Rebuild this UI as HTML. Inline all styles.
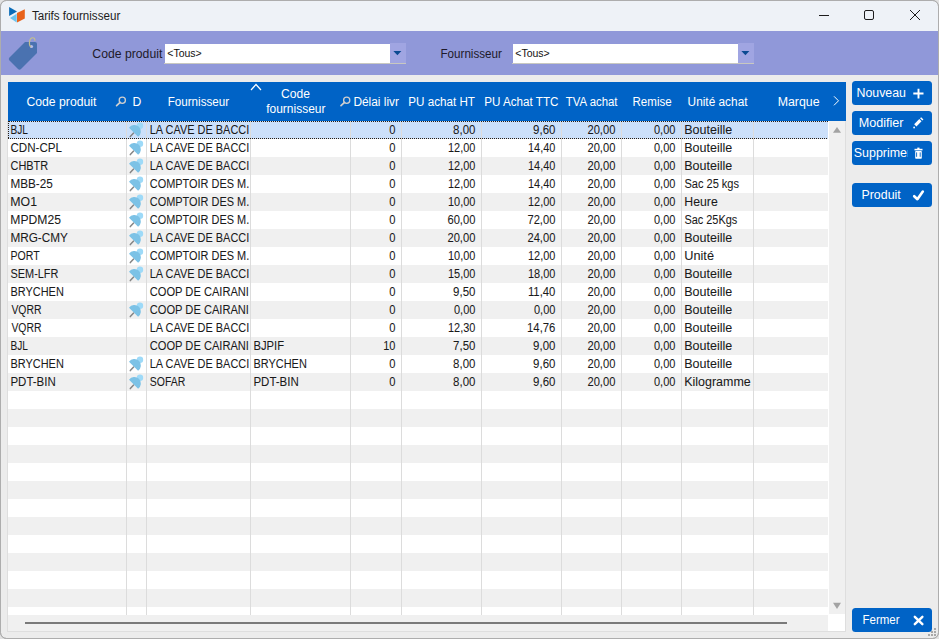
<!DOCTYPE html><html><head><meta charset="utf-8"><style>html,body{margin:0;padding:0;overflow:hidden;background:#fff}svg{display:block}text{font-family:"Liberation Sans",sans-serif}</style></head><body>
<svg width="939" height="639" viewBox="0 0 939 639">
<rect x="0" y="0" width="939" height="639" fill="#e2e2e2"/>
<rect x="0.5" y="0.5" width="938" height="638" rx="6" fill="#ececec" stroke="#adadad"/>
<path d="M1 7 Q1 1 7 1 L932 1 Q938 1 938 7 L938 31 L1 31 Z" fill="#eef2f7"/>
<polygon points="9.1,7.1 17,11.4 9.1,15.9" fill="#0a6cb8"/>
<polygon points="10,18.1 16.7,13.8 16.7,22.4" fill="#6cc4ee"/>
<polygon points="17,13.1 24.8,9.2 24.8,18.5 17,22.6" fill="#e8621a"/>
<text x="31.9" y="19.7" font-size="12" fill="#1c1c1c" text-anchor="start" textLength="88.36" lengthAdjust="spacingAndGlyphs">Tarifs fournisseur</text>
<rect x="819" y="15" width="10" height="1" fill="#1c1c1c"/>
<rect x="864.5" y="10.5" width="9" height="9" rx="1.5" fill="none" stroke="#1c1c1c"/>
<path d="M910 10 L920 20 M920 10 L910 20" stroke="#1c1c1c" stroke-width="1"/>
<rect x="1" y="31" width="937" height="44" fill="#9098d9"/>
<path d="M25 42 L35 42 Q37 42 37 44 L37 53 L21 69 Q19.5 70.5 18 69 L9.5 60.5 Q8 59 9.5 57.5 Z" fill="#4a72b0"/>
<circle cx="31.5" cy="46.5" r="1.6" fill="#b8bce8"/>
<path d="M31 47 C28.5 45.5 29 38.5 32.2 37.8 C34.2 37.4 35.2 39 34.8 40.8" fill="none" stroke="#c2be8e" stroke-width="1.15"/>
<text x="92.38" y="57.8" font-size="12" fill="#1e1a2a" text-anchor="start" textLength="69.93" lengthAdjust="spacingAndGlyphs">Code produit</text>
<text x="440.43" y="57.6" font-size="12" fill="#1e1a2a" text-anchor="start" textLength="61.52" lengthAdjust="spacingAndGlyphs">Fournisseur</text>
<rect x="165" y="44" width="225" height="19" fill="#ffffff"/>
<rect x="390" y="43" width="16" height="20" fill="#a0a5e2"/>
<rect x="164" y="63" width="242" height="1" fill="#c8c8c0"/>
<polygon points="393.4,51 401.4,51 397.4,55.2" fill="#0b4a92"/>
<rect x="513" y="44" width="225" height="19" fill="#ffffff"/>
<rect x="738" y="43" width="16" height="20" fill="#a0a5e2"/>
<rect x="512" y="63" width="242" height="1" fill="#c8c8c0"/>
<polygon points="741.4,51 749.4,51 745.4,55.2" fill="#0b4a92"/>
<text x="167.3" y="56.8" font-size="10.5" fill="#111" text-anchor="start" textLength="34.45" lengthAdjust="spacingAndGlyphs">&lt;Tous&gt;</text>
<text x="515.3" y="56.8" font-size="10.5" fill="#111" text-anchor="start" textLength="34.45" lengthAdjust="spacingAndGlyphs">&lt;Tous&gt;</text>
<rect x="8" y="82" width="838" height="39" fill="#0063c6"/>
<rect x="8" y="121" width="820" height="494" fill="#ffffff"/>
<rect x="8" y="121" width="820" height="18" fill="#cce0fa"/>
<rect x="8" y="157" width="820" height="18" fill="#f0f0f0"/>
<rect x="8" y="193" width="820" height="18" fill="#f0f0f0"/>
<rect x="8" y="229" width="820" height="18" fill="#f0f0f0"/>
<rect x="8" y="265" width="820" height="18" fill="#f0f0f0"/>
<rect x="8" y="301" width="820" height="18" fill="#f0f0f0"/>
<rect x="8" y="337" width="820" height="18" fill="#f0f0f0"/>
<rect x="8" y="373" width="820" height="18" fill="#f0f0f0"/>
<rect x="8" y="409" width="820" height="18" fill="#f0f0f0"/>
<rect x="8" y="445" width="820" height="18" fill="#f0f0f0"/>
<rect x="8" y="481" width="820" height="18" fill="#f0f0f0"/>
<rect x="8" y="517" width="820" height="18" fill="#f0f0f0"/>
<rect x="8" y="553" width="820" height="18" fill="#f0f0f0"/>
<rect x="8" y="589" width="820" height="18" fill="#f0f0f0"/>
<rect x="126" y="121" width="1" height="494" fill="#dcdcdc"/>
<rect x="146" y="121" width="1" height="494" fill="#dcdcdc"/>
<rect x="250" y="121" width="1" height="494" fill="#dcdcdc"/>
<rect x="350" y="121" width="1" height="494" fill="#dcdcdc"/>
<rect x="401" y="121" width="1" height="494" fill="#dcdcdc"/>
<rect x="481" y="121" width="1" height="494" fill="#dcdcdc"/>
<rect x="561" y="121" width="1" height="494" fill="#dcdcdc"/>
<rect x="621" y="121" width="1" height="494" fill="#dcdcdc"/>
<rect x="681" y="121" width="1" height="494" fill="#dcdcdc"/>
<rect x="753" y="121" width="1" height="494" fill="#dcdcdc"/>
<line x1="8" y1="121.5" x2="828" y2="121.5" stroke="#2a1e12" stroke-dasharray="1 1" stroke-dashoffset="1"/>
<line x1="8" y1="138.5" x2="828" y2="138.5" stroke="#2a1e12" stroke-dasharray="1 1"/>
<line x1="8.5" y1="121" x2="8.5" y2="139" stroke="#2a1e12" stroke-dasharray="1 1"/>
<text x="26.48" y="105.6" font-size="12" fill="#ffffff" text-anchor="start" textLength="69.93" lengthAdjust="spacingAndGlyphs">Code produit</text>
<text x="132.49" y="105.9" font-size="12" fill="#ffffff" text-anchor="start" textLength="8.8" lengthAdjust="spacingAndGlyphs">D</text>
<text x="167.63" y="105.9" font-size="12" fill="#ffffff" text-anchor="start" textLength="61.52" lengthAdjust="spacingAndGlyphs">Fournisseur</text>
<text x="280.99" y="97.9" font-size="12" fill="#ffffff" text-anchor="start" textLength="28.9" lengthAdjust="spacingAndGlyphs">Code</text>
<text x="266.2" y="112.8" font-size="12" fill="#ffffff" text-anchor="start" textLength="59.27" lengthAdjust="spacingAndGlyphs">fournisseur</text>
<text x="353.41" y="105.9" font-size="12" fill="#ffffff" text-anchor="start" textLength="45.61" lengthAdjust="spacingAndGlyphs">Délai livr</text>
<text x="408.33" y="105.9" font-size="12" fill="#ffffff" text-anchor="start" textLength="66.65" lengthAdjust="spacingAndGlyphs">PU achat HT</text>
<text x="484.23" y="105.9" font-size="12" fill="#ffffff" text-anchor="start" textLength="74.24" lengthAdjust="spacingAndGlyphs">PU Achat TTC</text>
<text x="565.8" y="105.9" font-size="12" fill="#ffffff" text-anchor="start" textLength="51.71" lengthAdjust="spacingAndGlyphs">TVA achat</text>
<text x="632.54" y="105.9" font-size="12" fill="#ffffff" text-anchor="start" textLength="39.12" lengthAdjust="spacingAndGlyphs">Remise</text>
<text x="687.61" y="105.9" font-size="12" fill="#ffffff" text-anchor="start" textLength="59.89" lengthAdjust="spacingAndGlyphs">Unité achat</text>
<text x="777.67" y="105.9" font-size="12" fill="#ffffff" text-anchor="start" textLength="41.94" lengthAdjust="spacingAndGlyphs">Marque</text>
<circle cx="122.3" cy="100.19999999999999" r="3.1" fill="none" stroke="#cfcfcf" stroke-width="1.3"/>
<line x1="116.60000000000001" y1="105.69999999999999" x2="120.10000000000001" y2="102.39999999999999" stroke="#cfcfcf" stroke-width="1.7" stroke-linecap="round"/>
<circle cx="346.70000000000005" cy="100.19999999999999" r="3.1" fill="none" stroke="#cfcfcf" stroke-width="1.3"/>
<line x1="341.0" y1="105.69999999999999" x2="344.5" y2="102.39999999999999" stroke="#cfcfcf" stroke-width="1.7" stroke-linecap="round"/>
<polyline points="251,90 256,84.5 261,90" fill="none" stroke="#ffffff" stroke-width="1.2"/>
<polyline points="834,96.3 838.5,100.8 834,105.3" fill="none" stroke="#ffffff" stroke-width="1"/>
<text x="10.56" y="133.8" font-size="12" fill="#1a1a1a" text-anchor="start" textLength="17.42" lengthAdjust="spacingAndGlyphs" stroke="#1a1a1a" stroke-width="0.06">BJL</text>
<g transform="translate(126,121)"><line x1="4.3" y1="15.6" x2="7.6" y2="12.1" stroke="#858585" stroke-width="1.5" stroke-linecap="round"/><circle cx="14" cy="4.7" r="3.2" fill="#9edaf8"/><path d="M3 6.8 A6.5 6.5 0 1 1 12.1 15.8 Z" fill="#7cc2e6"/></g>
<svg x="146" y="121" width="103" height="18" overflow="hidden">
<text x="3.79" y="12.8" font-size="12" fill="#1a1a1a" text-anchor="start" textLength="99.46" lengthAdjust="spacingAndGlyphs" stroke="#1a1a1a" stroke-width="0.06">LA CAVE DE BACCI</text>
</svg>
<text x="395.4" y="133.8" font-size="12" fill="#1a1a1a" text-anchor="end" textLength="6.24" lengthAdjust="spacingAndGlyphs" stroke="#1a1a1a" stroke-width="0.06">0</text>
<text x="475.4" y="133.8" font-size="12" fill="#1a1a1a" text-anchor="end" textLength="22.3" lengthAdjust="spacingAndGlyphs" stroke="#1a1a1a" stroke-width="0.06">8,00</text>
<text x="555.4" y="133.8" font-size="12" fill="#1a1a1a" text-anchor="end" textLength="22.3" lengthAdjust="spacingAndGlyphs" stroke="#1a1a1a" stroke-width="0.06">9,60</text>
<text x="615.4" y="133.8" font-size="12" fill="#1a1a1a" text-anchor="end" textLength="27.96" lengthAdjust="spacingAndGlyphs" stroke="#1a1a1a" stroke-width="0.06">20,00</text>
<text x="675.4" y="133.8" font-size="12" fill="#1a1a1a" text-anchor="end" textLength="21.43" lengthAdjust="spacingAndGlyphs" stroke="#1a1a1a" stroke-width="0.06">0,00</text>
<text x="684.26" y="133.8" font-size="12" fill="#1a1a1a" text-anchor="start" textLength="48.02" lengthAdjust="spacingAndGlyphs" stroke="#1a1a1a" stroke-width="0.06">Bouteille</text>
<text x="10.43" y="151.8" font-size="12" fill="#1a1a1a" text-anchor="start" textLength="51.5" lengthAdjust="spacingAndGlyphs" stroke="#1a1a1a" stroke-width="0.06">CDN-CPL</text>
<g transform="translate(126,139)"><line x1="4.3" y1="15.6" x2="7.6" y2="12.1" stroke="#858585" stroke-width="1.5" stroke-linecap="round"/><circle cx="14" cy="4.7" r="3.2" fill="#9edaf8"/><path d="M3 6.8 A6.5 6.5 0 1 1 12.1 15.8 Z" fill="#7cc2e6"/></g>
<svg x="146" y="139" width="103" height="18" overflow="hidden">
<text x="3.79" y="12.8" font-size="12" fill="#1a1a1a" text-anchor="start" textLength="99.46" lengthAdjust="spacingAndGlyphs" stroke="#1a1a1a" stroke-width="0.06">LA CAVE DE BACCI</text>
</svg>
<text x="395.4" y="151.8" font-size="12" fill="#1a1a1a" text-anchor="end" textLength="6.24" lengthAdjust="spacingAndGlyphs" stroke="#1a1a1a" stroke-width="0.06">0</text>
<text x="475.4" y="151.8" font-size="12" fill="#1a1a1a" text-anchor="end" textLength="27.34" lengthAdjust="spacingAndGlyphs" stroke="#1a1a1a" stroke-width="0.06">12,00</text>
<text x="555.4" y="151.8" font-size="12" fill="#1a1a1a" text-anchor="end" textLength="27.34" lengthAdjust="spacingAndGlyphs" stroke="#1a1a1a" stroke-width="0.06">14,40</text>
<text x="615.4" y="151.8" font-size="12" fill="#1a1a1a" text-anchor="end" textLength="27.96" lengthAdjust="spacingAndGlyphs" stroke="#1a1a1a" stroke-width="0.06">20,00</text>
<text x="675.4" y="151.8" font-size="12" fill="#1a1a1a" text-anchor="end" textLength="21.43" lengthAdjust="spacingAndGlyphs" stroke="#1a1a1a" stroke-width="0.06">0,00</text>
<text x="684.26" y="151.8" font-size="12" fill="#1a1a1a" text-anchor="start" textLength="48.02" lengthAdjust="spacingAndGlyphs" stroke="#1a1a1a" stroke-width="0.06">Bouteille</text>
<text x="10.49" y="169.8" font-size="12" fill="#1a1a1a" text-anchor="start" textLength="37.73" lengthAdjust="spacingAndGlyphs" stroke="#1a1a1a" stroke-width="0.06">CHBTR</text>
<g transform="translate(126,157)"><line x1="4.3" y1="15.6" x2="7.6" y2="12.1" stroke="#858585" stroke-width="1.5" stroke-linecap="round"/><circle cx="14" cy="4.7" r="3.2" fill="#9edaf8"/><path d="M3 6.8 A6.5 6.5 0 1 1 12.1 15.8 Z" fill="#7cc2e6"/></g>
<svg x="146" y="157" width="103" height="18" overflow="hidden">
<text x="3.79" y="12.8" font-size="12" fill="#1a1a1a" text-anchor="start" textLength="99.46" lengthAdjust="spacingAndGlyphs" stroke="#1a1a1a" stroke-width="0.06">LA CAVE DE BACCI</text>
</svg>
<text x="395.4" y="169.8" font-size="12" fill="#1a1a1a" text-anchor="end" textLength="6.24" lengthAdjust="spacingAndGlyphs" stroke="#1a1a1a" stroke-width="0.06">0</text>
<text x="475.4" y="169.8" font-size="12" fill="#1a1a1a" text-anchor="end" textLength="27.34" lengthAdjust="spacingAndGlyphs" stroke="#1a1a1a" stroke-width="0.06">12,00</text>
<text x="555.4" y="169.8" font-size="12" fill="#1a1a1a" text-anchor="end" textLength="27.34" lengthAdjust="spacingAndGlyphs" stroke="#1a1a1a" stroke-width="0.06">14,40</text>
<text x="615.4" y="169.8" font-size="12" fill="#1a1a1a" text-anchor="end" textLength="27.96" lengthAdjust="spacingAndGlyphs" stroke="#1a1a1a" stroke-width="0.06">20,00</text>
<text x="675.4" y="169.8" font-size="12" fill="#1a1a1a" text-anchor="end" textLength="21.43" lengthAdjust="spacingAndGlyphs" stroke="#1a1a1a" stroke-width="0.06">0,00</text>
<text x="684.26" y="169.8" font-size="12" fill="#1a1a1a" text-anchor="start" textLength="48.02" lengthAdjust="spacingAndGlyphs" stroke="#1a1a1a" stroke-width="0.06">Bouteille</text>
<text x="10.42" y="187.8" font-size="12" fill="#1a1a1a" text-anchor="start" textLength="42.33" lengthAdjust="spacingAndGlyphs" stroke="#1a1a1a" stroke-width="0.06">MBB-25</text>
<g transform="translate(126,175)"><line x1="4.3" y1="15.6" x2="7.6" y2="12.1" stroke="#858585" stroke-width="1.5" stroke-linecap="round"/><circle cx="14" cy="4.7" r="3.2" fill="#9edaf8"/><path d="M3 6.8 A6.5 6.5 0 1 1 12.1 15.8 Z" fill="#7cc2e6"/></g>
<svg x="146" y="175" width="103" height="18" overflow="hidden">
<text x="3.79" y="12.8" font-size="12" fill="#1a1a1a" text-anchor="start" textLength="99.44" lengthAdjust="spacingAndGlyphs" stroke="#1a1a1a" stroke-width="0.06">COMPTOIR DES M.</text>
</svg>
<text x="395.4" y="187.8" font-size="12" fill="#1a1a1a" text-anchor="end" textLength="6.24" lengthAdjust="spacingAndGlyphs" stroke="#1a1a1a" stroke-width="0.06">0</text>
<text x="475.4" y="187.8" font-size="12" fill="#1a1a1a" text-anchor="end" textLength="27.34" lengthAdjust="spacingAndGlyphs" stroke="#1a1a1a" stroke-width="0.06">12,00</text>
<text x="555.4" y="187.8" font-size="12" fill="#1a1a1a" text-anchor="end" textLength="27.34" lengthAdjust="spacingAndGlyphs" stroke="#1a1a1a" stroke-width="0.06">14,40</text>
<text x="615.4" y="187.8" font-size="12" fill="#1a1a1a" text-anchor="end" textLength="27.96" lengthAdjust="spacingAndGlyphs" stroke="#1a1a1a" stroke-width="0.06">20,00</text>
<text x="675.4" y="187.8" font-size="12" fill="#1a1a1a" text-anchor="end" textLength="21.43" lengthAdjust="spacingAndGlyphs" stroke="#1a1a1a" stroke-width="0.06">0,00</text>
<text x="684.38" y="187.8" font-size="12" fill="#1a1a1a" text-anchor="start" textLength="54.67" lengthAdjust="spacingAndGlyphs" stroke="#1a1a1a" stroke-width="0.06">Sac 25 kgs</text>
<text x="10.38" y="205.8" font-size="12" fill="#1a1a1a" text-anchor="start" textLength="26.67" lengthAdjust="spacingAndGlyphs" stroke="#1a1a1a" stroke-width="0.06">MO1</text>
<g transform="translate(126,193)"><line x1="4.3" y1="15.6" x2="7.6" y2="12.1" stroke="#858585" stroke-width="1.5" stroke-linecap="round"/><circle cx="14" cy="4.7" r="3.2" fill="#9edaf8"/><path d="M3 6.8 A6.5 6.5 0 1 1 12.1 15.8 Z" fill="#7cc2e6"/></g>
<svg x="146" y="193" width="103" height="18" overflow="hidden">
<text x="3.79" y="12.8" font-size="12" fill="#1a1a1a" text-anchor="start" textLength="99.44" lengthAdjust="spacingAndGlyphs" stroke="#1a1a1a" stroke-width="0.06">COMPTOIR DES M.</text>
</svg>
<text x="395.4" y="205.8" font-size="12" fill="#1a1a1a" text-anchor="end" textLength="6.24" lengthAdjust="spacingAndGlyphs" stroke="#1a1a1a" stroke-width="0.06">0</text>
<text x="475.4" y="205.8" font-size="12" fill="#1a1a1a" text-anchor="end" textLength="27.34" lengthAdjust="spacingAndGlyphs" stroke="#1a1a1a" stroke-width="0.06">10,00</text>
<text x="555.4" y="205.8" font-size="12" fill="#1a1a1a" text-anchor="end" textLength="27.34" lengthAdjust="spacingAndGlyphs" stroke="#1a1a1a" stroke-width="0.06">12,00</text>
<text x="615.4" y="205.8" font-size="12" fill="#1a1a1a" text-anchor="end" textLength="27.96" lengthAdjust="spacingAndGlyphs" stroke="#1a1a1a" stroke-width="0.06">20,00</text>
<text x="675.4" y="205.8" font-size="12" fill="#1a1a1a" text-anchor="end" textLength="21.43" lengthAdjust="spacingAndGlyphs" stroke="#1a1a1a" stroke-width="0.06">0,00</text>
<text x="684.27" y="205.8" font-size="12" fill="#1a1a1a" text-anchor="start" textLength="33.53" lengthAdjust="spacingAndGlyphs" stroke="#1a1a1a" stroke-width="0.06">Heure</text>
<text x="10.39" y="223.8" font-size="12" fill="#1a1a1a" text-anchor="start" textLength="50.54" lengthAdjust="spacingAndGlyphs" stroke="#1a1a1a" stroke-width="0.06">MPDM25</text>
<g transform="translate(126,211)"><line x1="4.3" y1="15.6" x2="7.6" y2="12.1" stroke="#858585" stroke-width="1.5" stroke-linecap="round"/><circle cx="14" cy="4.7" r="3.2" fill="#9edaf8"/><path d="M3 6.8 A6.5 6.5 0 1 1 12.1 15.8 Z" fill="#7cc2e6"/></g>
<svg x="146" y="211" width="103" height="18" overflow="hidden">
<text x="3.79" y="12.8" font-size="12" fill="#1a1a1a" text-anchor="start" textLength="99.44" lengthAdjust="spacingAndGlyphs" stroke="#1a1a1a" stroke-width="0.06">COMPTOIR DES M.</text>
</svg>
<text x="395.4" y="223.8" font-size="12" fill="#1a1a1a" text-anchor="end" textLength="6.24" lengthAdjust="spacingAndGlyphs" stroke="#1a1a1a" stroke-width="0.06">0</text>
<text x="475.4" y="223.8" font-size="12" fill="#1a1a1a" text-anchor="end" textLength="27.96" lengthAdjust="spacingAndGlyphs" stroke="#1a1a1a" stroke-width="0.06">60,00</text>
<text x="555.4" y="223.8" font-size="12" fill="#1a1a1a" text-anchor="end" textLength="27.96" lengthAdjust="spacingAndGlyphs" stroke="#1a1a1a" stroke-width="0.06">72,00</text>
<text x="615.4" y="223.8" font-size="12" fill="#1a1a1a" text-anchor="end" textLength="27.96" lengthAdjust="spacingAndGlyphs" stroke="#1a1a1a" stroke-width="0.06">20,00</text>
<text x="675.4" y="223.8" font-size="12" fill="#1a1a1a" text-anchor="end" textLength="21.43" lengthAdjust="spacingAndGlyphs" stroke="#1a1a1a" stroke-width="0.06">0,00</text>
<text x="684.39" y="223.8" font-size="12" fill="#1a1a1a" text-anchor="start" textLength="52.96" lengthAdjust="spacingAndGlyphs" stroke="#1a1a1a" stroke-width="0.06">Sac 25Kgs</text>
<text x="10.42" y="241.8" font-size="12" fill="#1a1a1a" text-anchor="start" textLength="57.54" lengthAdjust="spacingAndGlyphs" stroke="#1a1a1a" stroke-width="0.06">MRG-CMY</text>
<g transform="translate(126,229)"><line x1="4.3" y1="15.6" x2="7.6" y2="12.1" stroke="#858585" stroke-width="1.5" stroke-linecap="round"/><circle cx="14" cy="4.7" r="3.2" fill="#9edaf8"/><path d="M3 6.8 A6.5 6.5 0 1 1 12.1 15.8 Z" fill="#7cc2e6"/></g>
<svg x="146" y="229" width="103" height="18" overflow="hidden">
<text x="3.79" y="12.8" font-size="12" fill="#1a1a1a" text-anchor="start" textLength="99.46" lengthAdjust="spacingAndGlyphs" stroke="#1a1a1a" stroke-width="0.06">LA CAVE DE BACCI</text>
</svg>
<text x="395.4" y="241.8" font-size="12" fill="#1a1a1a" text-anchor="end" textLength="6.24" lengthAdjust="spacingAndGlyphs" stroke="#1a1a1a" stroke-width="0.06">0</text>
<text x="475.4" y="241.8" font-size="12" fill="#1a1a1a" text-anchor="end" textLength="27.96" lengthAdjust="spacingAndGlyphs" stroke="#1a1a1a" stroke-width="0.06">20,00</text>
<text x="555.4" y="241.8" font-size="12" fill="#1a1a1a" text-anchor="end" textLength="27.96" lengthAdjust="spacingAndGlyphs" stroke="#1a1a1a" stroke-width="0.06">24,00</text>
<text x="615.4" y="241.8" font-size="12" fill="#1a1a1a" text-anchor="end" textLength="27.96" lengthAdjust="spacingAndGlyphs" stroke="#1a1a1a" stroke-width="0.06">20,00</text>
<text x="675.4" y="241.8" font-size="12" fill="#1a1a1a" text-anchor="end" textLength="21.43" lengthAdjust="spacingAndGlyphs" stroke="#1a1a1a" stroke-width="0.06">0,00</text>
<text x="684.26" y="241.8" font-size="12" fill="#1a1a1a" text-anchor="start" textLength="48.02" lengthAdjust="spacingAndGlyphs" stroke="#1a1a1a" stroke-width="0.06">Bouteille</text>
<text x="10.52" y="259.8" font-size="12" fill="#1a1a1a" text-anchor="start" textLength="29.09" lengthAdjust="spacingAndGlyphs" stroke="#1a1a1a" stroke-width="0.06">PORT</text>
<g transform="translate(126,247)"><line x1="4.3" y1="15.6" x2="7.6" y2="12.1" stroke="#858585" stroke-width="1.5" stroke-linecap="round"/><circle cx="14" cy="4.7" r="3.2" fill="#9edaf8"/><path d="M3 6.8 A6.5 6.5 0 1 1 12.1 15.8 Z" fill="#7cc2e6"/></g>
<svg x="146" y="247" width="103" height="18" overflow="hidden">
<text x="3.79" y="12.8" font-size="12" fill="#1a1a1a" text-anchor="start" textLength="99.44" lengthAdjust="spacingAndGlyphs" stroke="#1a1a1a" stroke-width="0.06">COMPTOIR DES M.</text>
</svg>
<text x="395.4" y="259.8" font-size="12" fill="#1a1a1a" text-anchor="end" textLength="6.24" lengthAdjust="spacingAndGlyphs" stroke="#1a1a1a" stroke-width="0.06">0</text>
<text x="475.4" y="259.8" font-size="12" fill="#1a1a1a" text-anchor="end" textLength="27.34" lengthAdjust="spacingAndGlyphs" stroke="#1a1a1a" stroke-width="0.06">10,00</text>
<text x="555.4" y="259.8" font-size="12" fill="#1a1a1a" text-anchor="end" textLength="27.34" lengthAdjust="spacingAndGlyphs" stroke="#1a1a1a" stroke-width="0.06">12,00</text>
<text x="615.4" y="259.8" font-size="12" fill="#1a1a1a" text-anchor="end" textLength="27.96" lengthAdjust="spacingAndGlyphs" stroke="#1a1a1a" stroke-width="0.06">20,00</text>
<text x="675.4" y="259.8" font-size="12" fill="#1a1a1a" text-anchor="end" textLength="21.43" lengthAdjust="spacingAndGlyphs" stroke="#1a1a1a" stroke-width="0.06">0,00</text>
<text x="684.24" y="259.8" font-size="12" fill="#1a1a1a" text-anchor="start" textLength="29.74" lengthAdjust="spacingAndGlyphs" stroke="#1a1a1a" stroke-width="0.06">Unité</text>
<text x="10.49" y="277.8" font-size="12" fill="#1a1a1a" text-anchor="start" textLength="47.92" lengthAdjust="spacingAndGlyphs" stroke="#1a1a1a" stroke-width="0.06">SEM-LFR</text>
<g transform="translate(126,265)"><line x1="4.3" y1="15.6" x2="7.6" y2="12.1" stroke="#858585" stroke-width="1.5" stroke-linecap="round"/><circle cx="14" cy="4.7" r="3.2" fill="#9edaf8"/><path d="M3 6.8 A6.5 6.5 0 1 1 12.1 15.8 Z" fill="#7cc2e6"/></g>
<svg x="146" y="265" width="103" height="18" overflow="hidden">
<text x="3.79" y="12.8" font-size="12" fill="#1a1a1a" text-anchor="start" textLength="99.46" lengthAdjust="spacingAndGlyphs" stroke="#1a1a1a" stroke-width="0.06">LA CAVE DE BACCI</text>
</svg>
<text x="395.4" y="277.8" font-size="12" fill="#1a1a1a" text-anchor="end" textLength="6.24" lengthAdjust="spacingAndGlyphs" stroke="#1a1a1a" stroke-width="0.06">0</text>
<text x="475.4" y="277.8" font-size="12" fill="#1a1a1a" text-anchor="end" textLength="27.34" lengthAdjust="spacingAndGlyphs" stroke="#1a1a1a" stroke-width="0.06">15,00</text>
<text x="555.4" y="277.8" font-size="12" fill="#1a1a1a" text-anchor="end" textLength="27.34" lengthAdjust="spacingAndGlyphs" stroke="#1a1a1a" stroke-width="0.06">18,00</text>
<text x="615.4" y="277.8" font-size="12" fill="#1a1a1a" text-anchor="end" textLength="27.96" lengthAdjust="spacingAndGlyphs" stroke="#1a1a1a" stroke-width="0.06">20,00</text>
<text x="675.4" y="277.8" font-size="12" fill="#1a1a1a" text-anchor="end" textLength="21.43" lengthAdjust="spacingAndGlyphs" stroke="#1a1a1a" stroke-width="0.06">0,00</text>
<text x="684.26" y="277.8" font-size="12" fill="#1a1a1a" text-anchor="start" textLength="48.02" lengthAdjust="spacingAndGlyphs" stroke="#1a1a1a" stroke-width="0.06">Bouteille</text>
<text x="10.49" y="295.8" font-size="12" fill="#1a1a1a" text-anchor="start" textLength="53.34" lengthAdjust="spacingAndGlyphs" stroke="#1a1a1a" stroke-width="0.06">BRYCHEN</text>
<svg x="146" y="283" width="103" height="18" overflow="hidden">
<text x="3.77" y="12.8" font-size="12" fill="#1a1a1a" text-anchor="start" textLength="99.18" lengthAdjust="spacingAndGlyphs" stroke="#1a1a1a" stroke-width="0.06">COOP DE CAIRANI</text>
</svg>
<text x="395.4" y="295.8" font-size="12" fill="#1a1a1a" text-anchor="end" textLength="6.24" lengthAdjust="spacingAndGlyphs" stroke="#1a1a1a" stroke-width="0.06">0</text>
<text x="475.4" y="295.8" font-size="12" fill="#1a1a1a" text-anchor="end" textLength="22.3" lengthAdjust="spacingAndGlyphs" stroke="#1a1a1a" stroke-width="0.06">9,50</text>
<text x="555.4" y="295.8" font-size="12" fill="#1a1a1a" text-anchor="end" textLength="27.48" lengthAdjust="spacingAndGlyphs" stroke="#1a1a1a" stroke-width="0.06">11,40</text>
<text x="615.4" y="295.8" font-size="12" fill="#1a1a1a" text-anchor="end" textLength="27.96" lengthAdjust="spacingAndGlyphs" stroke="#1a1a1a" stroke-width="0.06">20,00</text>
<text x="675.4" y="295.8" font-size="12" fill="#1a1a1a" text-anchor="end" textLength="21.43" lengthAdjust="spacingAndGlyphs" stroke="#1a1a1a" stroke-width="0.06">0,00</text>
<text x="684.26" y="295.8" font-size="12" fill="#1a1a1a" text-anchor="start" textLength="48.02" lengthAdjust="spacingAndGlyphs" stroke="#1a1a1a" stroke-width="0.06">Bouteille</text>
<text x="11.4" y="313.8" font-size="12" fill="#1a1a1a" text-anchor="start" textLength="30.08" lengthAdjust="spacingAndGlyphs" stroke="#1a1a1a" stroke-width="0.06">VQRR</text>
<g transform="translate(126,301)"><line x1="4.3" y1="15.6" x2="7.6" y2="12.1" stroke="#858585" stroke-width="1.5" stroke-linecap="round"/><circle cx="14" cy="4.7" r="3.2" fill="#9edaf8"/><path d="M3 6.8 A6.5 6.5 0 1 1 12.1 15.8 Z" fill="#7cc2e6"/></g>
<svg x="146" y="301" width="103" height="18" overflow="hidden">
<text x="3.77" y="12.8" font-size="12" fill="#1a1a1a" text-anchor="start" textLength="99.18" lengthAdjust="spacingAndGlyphs" stroke="#1a1a1a" stroke-width="0.06">COOP DE CAIRANI</text>
</svg>
<text x="395.4" y="313.8" font-size="12" fill="#1a1a1a" text-anchor="end" textLength="6.24" lengthAdjust="spacingAndGlyphs" stroke="#1a1a1a" stroke-width="0.06">0</text>
<text x="475.4" y="313.8" font-size="12" fill="#1a1a1a" text-anchor="end" textLength="21.43" lengthAdjust="spacingAndGlyphs" stroke="#1a1a1a" stroke-width="0.06">0,00</text>
<text x="555.4" y="313.8" font-size="12" fill="#1a1a1a" text-anchor="end" textLength="21.43" lengthAdjust="spacingAndGlyphs" stroke="#1a1a1a" stroke-width="0.06">0,00</text>
<text x="615.4" y="313.8" font-size="12" fill="#1a1a1a" text-anchor="end" textLength="27.96" lengthAdjust="spacingAndGlyphs" stroke="#1a1a1a" stroke-width="0.06">20,00</text>
<text x="675.4" y="313.8" font-size="12" fill="#1a1a1a" text-anchor="end" textLength="21.43" lengthAdjust="spacingAndGlyphs" stroke="#1a1a1a" stroke-width="0.06">0,00</text>
<text x="684.26" y="313.8" font-size="12" fill="#1a1a1a" text-anchor="start" textLength="48.02" lengthAdjust="spacingAndGlyphs" stroke="#1a1a1a" stroke-width="0.06">Bouteille</text>
<text x="11.4" y="331.8" font-size="12" fill="#1a1a1a" text-anchor="start" textLength="30.08" lengthAdjust="spacingAndGlyphs" stroke="#1a1a1a" stroke-width="0.06">VQRR</text>
<svg x="146" y="319" width="103" height="18" overflow="hidden">
<text x="3.79" y="12.8" font-size="12" fill="#1a1a1a" text-anchor="start" textLength="99.46" lengthAdjust="spacingAndGlyphs" stroke="#1a1a1a" stroke-width="0.06">LA CAVE DE BACCI</text>
</svg>
<text x="395.4" y="331.8" font-size="12" fill="#1a1a1a" text-anchor="end" textLength="6.24" lengthAdjust="spacingAndGlyphs" stroke="#1a1a1a" stroke-width="0.06">0</text>
<text x="475.4" y="331.8" font-size="12" fill="#1a1a1a" text-anchor="end" textLength="27.34" lengthAdjust="spacingAndGlyphs" stroke="#1a1a1a" stroke-width="0.06">12,30</text>
<text x="555.4" y="331.8" font-size="12" fill="#1a1a1a" text-anchor="end" textLength="28.32" lengthAdjust="spacingAndGlyphs" stroke="#1a1a1a" stroke-width="0.06">14,76</text>
<text x="615.4" y="331.8" font-size="12" fill="#1a1a1a" text-anchor="end" textLength="27.96" lengthAdjust="spacingAndGlyphs" stroke="#1a1a1a" stroke-width="0.06">20,00</text>
<text x="675.4" y="331.8" font-size="12" fill="#1a1a1a" text-anchor="end" textLength="21.43" lengthAdjust="spacingAndGlyphs" stroke="#1a1a1a" stroke-width="0.06">0,00</text>
<text x="684.26" y="331.8" font-size="12" fill="#1a1a1a" text-anchor="start" textLength="48.02" lengthAdjust="spacingAndGlyphs" stroke="#1a1a1a" stroke-width="0.06">Bouteille</text>
<text x="10.56" y="349.8" font-size="12" fill="#1a1a1a" text-anchor="start" textLength="17.42" lengthAdjust="spacingAndGlyphs" stroke="#1a1a1a" stroke-width="0.06">BJL</text>
<svg x="146" y="337" width="103" height="18" overflow="hidden">
<text x="3.77" y="12.8" font-size="12" fill="#1a1a1a" text-anchor="start" textLength="99.18" lengthAdjust="spacingAndGlyphs" stroke="#1a1a1a" stroke-width="0.06">COOP DE CAIRANI</text>
</svg>
<text x="253.46" y="349.8" font-size="12" fill="#1a1a1a" text-anchor="start" textLength="30.56" lengthAdjust="spacingAndGlyphs" stroke="#1a1a1a" stroke-width="0.06">BJPIF</text>
<text x="395.4" y="349.8" font-size="12" fill="#1a1a1a" text-anchor="end" textLength="12.25" lengthAdjust="spacingAndGlyphs" stroke="#1a1a1a" stroke-width="0.06">10</text>
<text x="475.4" y="349.8" font-size="12" fill="#1a1a1a" text-anchor="end" textLength="22.3" lengthAdjust="spacingAndGlyphs" stroke="#1a1a1a" stroke-width="0.06">7,50</text>
<text x="555.4" y="349.8" font-size="12" fill="#1a1a1a" text-anchor="end" textLength="22.3" lengthAdjust="spacingAndGlyphs" stroke="#1a1a1a" stroke-width="0.06">9,00</text>
<text x="615.4" y="349.8" font-size="12" fill="#1a1a1a" text-anchor="end" textLength="27.96" lengthAdjust="spacingAndGlyphs" stroke="#1a1a1a" stroke-width="0.06">20,00</text>
<text x="675.4" y="349.8" font-size="12" fill="#1a1a1a" text-anchor="end" textLength="21.43" lengthAdjust="spacingAndGlyphs" stroke="#1a1a1a" stroke-width="0.06">0,00</text>
<text x="684.26" y="349.8" font-size="12" fill="#1a1a1a" text-anchor="start" textLength="48.02" lengthAdjust="spacingAndGlyphs" stroke="#1a1a1a" stroke-width="0.06">Bouteille</text>
<text x="10.49" y="367.8" font-size="12" fill="#1a1a1a" text-anchor="start" textLength="53.34" lengthAdjust="spacingAndGlyphs" stroke="#1a1a1a" stroke-width="0.06">BRYCHEN</text>
<g transform="translate(126,355)"><line x1="4.3" y1="15.6" x2="7.6" y2="12.1" stroke="#858585" stroke-width="1.5" stroke-linecap="round"/><circle cx="14" cy="4.7" r="3.2" fill="#9edaf8"/><path d="M3 6.8 A6.5 6.5 0 1 1 12.1 15.8 Z" fill="#7cc2e6"/></g>
<svg x="146" y="355" width="103" height="18" overflow="hidden">
<text x="3.79" y="12.8" font-size="12" fill="#1a1a1a" text-anchor="start" textLength="99.46" lengthAdjust="spacingAndGlyphs" stroke="#1a1a1a" stroke-width="0.06">LA CAVE DE BACCI</text>
</svg>
<text x="253.49" y="367.8" font-size="12" fill="#1a1a1a" text-anchor="start" textLength="53.34" lengthAdjust="spacingAndGlyphs" stroke="#1a1a1a" stroke-width="0.06">BRYCHEN</text>
<text x="395.4" y="367.8" font-size="12" fill="#1a1a1a" text-anchor="end" textLength="6.24" lengthAdjust="spacingAndGlyphs" stroke="#1a1a1a" stroke-width="0.06">0</text>
<text x="475.4" y="367.8" font-size="12" fill="#1a1a1a" text-anchor="end" textLength="22.3" lengthAdjust="spacingAndGlyphs" stroke="#1a1a1a" stroke-width="0.06">8,00</text>
<text x="555.4" y="367.8" font-size="12" fill="#1a1a1a" text-anchor="end" textLength="22.3" lengthAdjust="spacingAndGlyphs" stroke="#1a1a1a" stroke-width="0.06">9,60</text>
<text x="615.4" y="367.8" font-size="12" fill="#1a1a1a" text-anchor="end" textLength="27.96" lengthAdjust="spacingAndGlyphs" stroke="#1a1a1a" stroke-width="0.06">20,00</text>
<text x="675.4" y="367.8" font-size="12" fill="#1a1a1a" text-anchor="end" textLength="21.43" lengthAdjust="spacingAndGlyphs" stroke="#1a1a1a" stroke-width="0.06">0,00</text>
<text x="684.26" y="367.8" font-size="12" fill="#1a1a1a" text-anchor="start" textLength="48.02" lengthAdjust="spacingAndGlyphs" stroke="#1a1a1a" stroke-width="0.06">Bouteille</text>
<text x="10.44" y="385.8" font-size="12" fill="#1a1a1a" text-anchor="start" textLength="45.29" lengthAdjust="spacingAndGlyphs" stroke="#1a1a1a" stroke-width="0.06">PDT-BIN</text>
<g transform="translate(126,373)"><line x1="4.3" y1="15.6" x2="7.6" y2="12.1" stroke="#858585" stroke-width="1.5" stroke-linecap="round"/><circle cx="14" cy="4.7" r="3.2" fill="#9edaf8"/><path d="M3 6.8 A6.5 6.5 0 1 1 12.1 15.8 Z" fill="#7cc2e6"/></g>
<svg x="146" y="373" width="103" height="18" overflow="hidden">
<text x="3.83" y="12.8" font-size="12" fill="#1a1a1a" text-anchor="start" textLength="35.47" lengthAdjust="spacingAndGlyphs" stroke="#1a1a1a" stroke-width="0.06">SOFAR</text>
</svg>
<text x="253.44" y="385.8" font-size="12" fill="#1a1a1a" text-anchor="start" textLength="45.29" lengthAdjust="spacingAndGlyphs" stroke="#1a1a1a" stroke-width="0.06">PDT-BIN</text>
<text x="395.4" y="385.8" font-size="12" fill="#1a1a1a" text-anchor="end" textLength="6.24" lengthAdjust="spacingAndGlyphs" stroke="#1a1a1a" stroke-width="0.06">0</text>
<text x="475.4" y="385.8" font-size="12" fill="#1a1a1a" text-anchor="end" textLength="22.3" lengthAdjust="spacingAndGlyphs" stroke="#1a1a1a" stroke-width="0.06">8,00</text>
<text x="555.4" y="385.8" font-size="12" fill="#1a1a1a" text-anchor="end" textLength="22.3" lengthAdjust="spacingAndGlyphs" stroke="#1a1a1a" stroke-width="0.06">9,60</text>
<text x="615.4" y="385.8" font-size="12" fill="#1a1a1a" text-anchor="end" textLength="27.96" lengthAdjust="spacingAndGlyphs" stroke="#1a1a1a" stroke-width="0.06">20,00</text>
<text x="675.4" y="385.8" font-size="12" fill="#1a1a1a" text-anchor="end" textLength="21.43" lengthAdjust="spacingAndGlyphs" stroke="#1a1a1a" stroke-width="0.06">0,00</text>
<text x="684.26" y="385.8" font-size="12" fill="#1a1a1a" text-anchor="start" textLength="66.51" lengthAdjust="spacingAndGlyphs" stroke="#1a1a1a" stroke-width="0.06">Kilogramme</text>
<rect x="8" y="615" width="820" height="16" fill="#f0f0f0"/>
<rect x="25" y="622" width="762" height="2" fill="#7a7a7a"/>
<rect x="829" y="121" width="16" height="493" fill="#f0f0f0"/>
<rect x="828" y="121" width="1" height="494" fill="#ffffff"/>
<rect x="828" y="614" width="17" height="17" fill="#ffffff"/>
<polygon points="833,132.8 841,132.8 837,127" fill="#a3a3a3"/>
<polygon points="833,602.8 841,602.8 837,608.9" fill="#a3a3a3"/>
<rect x="7" y="121" width="1" height="511" fill="#dedede"/>
<rect x="7" y="631" width="839" height="1" fill="#dedede"/>
<rect x="845" y="121" width="1" height="511" fill="#dedede"/>
<rect x="852" y="81" width="80" height="24" rx="3.5" fill="#0063c6"/>
<text x="856.47" y="96.8" font-size="12" fill="#ffffff" text-anchor="start" textLength="49.51" lengthAdjust="spacingAndGlyphs">Nouveau</text>
<path d="M918.5 88.7 V98.4 M913.3 93.5 H923.5" stroke="#fff" stroke-width="1.9"/>
<rect x="852" y="111" width="80" height="24" rx="3.5" fill="#0063c6"/>
<text x="858.75" y="126.8" font-size="12" fill="#ffffff" text-anchor="start" textLength="44.82" lengthAdjust="spacingAndGlyphs">Modifier</text>
<path d="M915.3 125.3 L920.4 120.2" stroke="#fff" stroke-width="3.2"/><path d="M921.2 119.4 L922.3 118.3" stroke="#fff" stroke-width="3.2"/><circle cx="914.1" cy="127.5" r="0.9" fill="#fff"/>
<rect x="852" y="141" width="80" height="24" rx="3.5" fill="#0063c6"/>
<svg x="852" y="141" width="56" height="24" overflow="hidden">
<text x="1.76" y="15.8" font-size="12" fill="#ffffff" text-anchor="start" textLength="57.41" lengthAdjust="spacingAndGlyphs">Supprimer</text>
</svg>
<path d="M914.5 149.6 H922.5" stroke="#fff" stroke-width="1.6"/><rect x="917.3" y="147.6" width="2.2" height="1.6" fill="#fff"/><rect x="915.2" y="151" width="6.6" height="7.8" rx="0.8" fill="#fff"/><path d="M916.6 152.4 V156.8 M920.2 152.4 V156.8" stroke="#0063c6" stroke-width="0.9"/>
<rect x="852" y="183" width="80" height="24" rx="3.5" fill="#0063c6"/>
<text x="861.47" y="198.8" font-size="12" fill="#ffffff" text-anchor="start" textLength="39.26" lengthAdjust="spacingAndGlyphs">Produit</text>
<polyline points="914.2,196.2 917.4,199.2 922.8,191.5" fill="none" stroke="#fff" stroke-width="2.6" stroke-linecap="round" stroke-linejoin="round"/>
<rect x="852" y="608" width="80" height="24" rx="3.5" fill="#0063c6"/>
<text x="862.54" y="623.8" font-size="12" fill="#ffffff" text-anchor="start" textLength="37.04" lengthAdjust="spacingAndGlyphs">Fermer</text>
<path d="M914.8 616.8 L922.4 624.2 M922.4 616.8 L914.8 624.2" stroke="#fff" stroke-width="2.4" stroke-linecap="round"/>
<rect x="934" y="628" width="2" height="2" fill="#a8a8a8"/>
<rect x="931" y="631" width="2" height="2" fill="#a8a8a8"/>
<rect x="934" y="631" width="2" height="2" fill="#a8a8a8"/>
<rect x="928" y="634" width="2" height="2" fill="#a8a8a8"/>
<rect x="931" y="634" width="2" height="2" fill="#a8a8a8"/>
<rect x="934" y="634" width="2" height="2" fill="#a8a8a8"/>
<rect x="0.5" y="0.5" width="938" height="638" rx="6" fill="none" stroke="#adadad"/>
</svg></body></html>
